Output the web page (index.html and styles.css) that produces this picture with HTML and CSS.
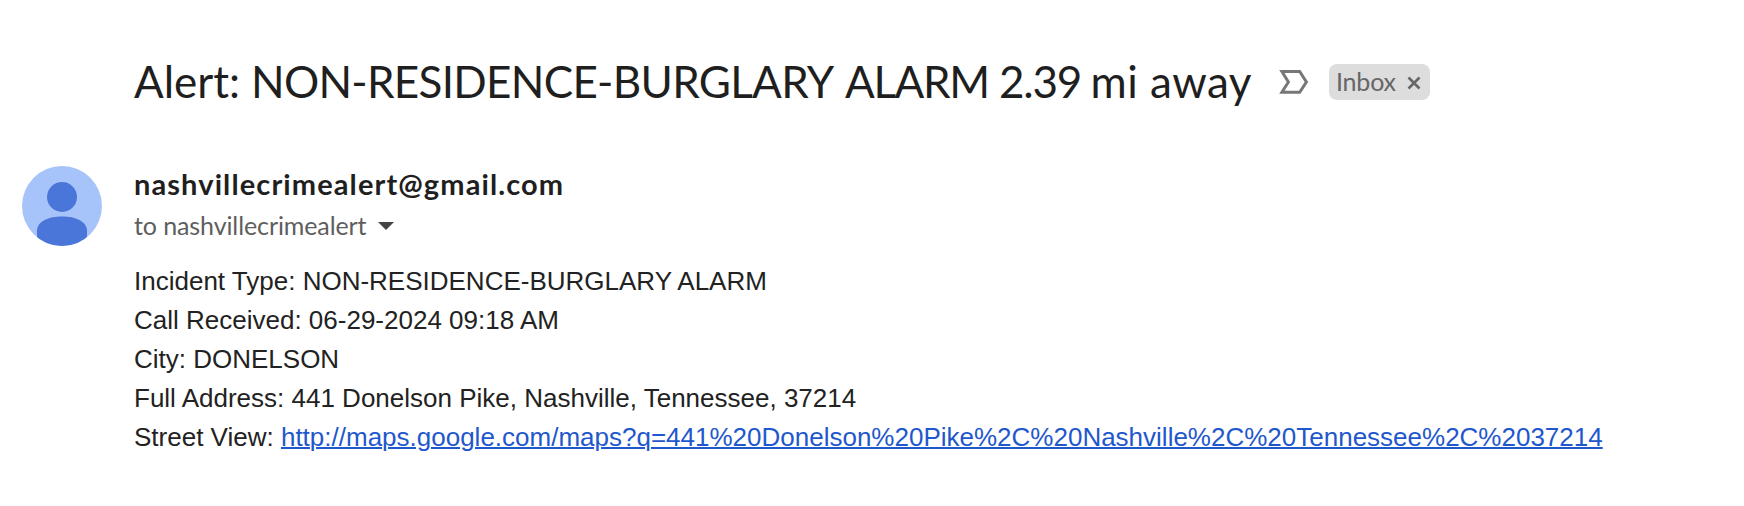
FILE: index.html
```html
<!DOCTYPE html>
<html lang="en">
<head>
<meta charset="utf-8">
<title>Alert</title>
<link rel="stylesheet" href="styles.css">
</head>
<body>
<header class="subject">
  <h1 class="title"><span class="w1">Alert: </span><span class="w2">NON-RESIDENCE-BURGLARY </span><span class="w3">ALARM </span><span class="w4">2.39 </span><span class="w5">mi </span><span class="w6">away</span></h1>
  <svg class="marker" width="32" height="26" viewBox="0 0 32 26"><path d="M3.900 2.500H21.700L28.400 13L21.700 23.300H3.900L10.400 13Z" fill="none" stroke="#777" stroke-width="3"/></svg>
  <div class="chip"><span class="chip-label">Inbox</span><svg class="close" width="14" height="14" viewBox="0 0 14 14"><path d="M1.500 1.500L12.500 12.500M12.500 1.500L1.500 12.500" stroke="#666" stroke-width="2.6"/></svg></div>
</header>
<main class="message">
  <svg class="avatar" width="80" height="80" viewBox="0 0 80 80">
    <defs><clipPath id="round"><circle cx="40" cy="40" r="40"/></clipPath></defs>
    <g clip-path="url(#round)"><rect width="80" height="80" fill="#a6c3fa"/><circle cx="40" cy="31" r="15" fill="#4b76d9"/><path d="M15 80V65C15 55 27 50.500 40 50.500S65 55 65 65V80Z" fill="#4b76d9"/></g>
  </svg>
  <div class="content">
    <div class="sender">nashvillecrimealert@gmail.com</div>
    <div class="recipient"><span>to nashvillecrimealert</span><svg class="arrow" width="16" height="8" viewBox="0 0 16 8"><path d="M0 0H16L8 8Z" fill="#444"/></svg></div>
    <div class="body">
      <div>Incident Type: NON-RESIDENCE-BURGLARY ALARM</div>
      <div>Call Received: 06-29-2024 09:18 AM</div>
      <div>City: DONELSON</div>
      <div>Full Address: 441 Donelson Pike, Nashville, Tennessee, 37214</div>
      <div>Street View: <a class="link" href="#">http://maps.google.com/maps?q=441%20Donelson%20Pike%2C%20Nashville%2C%20Tennessee%2C%2037214</a></div>
    </div>
  </div>
</main>
</body>
</html>
```
FILE: styles.css
```css
body { margin: 0; background: #fff; color: #1f1f1f; font-family: Lato, sans-serif; }
.subject { display: flex; align-items: center; height: 64px; padding: 50px 0 0 134px; }
.title { display: grid; grid-template-columns: 117px 594px 154px 91.5px 59.5px auto; margin: 0 0 2px; width: 1144px; font-size: 44px; line-height: 56px; font-weight: 400; white-space: nowrap; }
.w2 { letter-spacing: -0.7px; }
.w3 { letter-spacing: -1.4px; }
.w4 { letter-spacing: -1.2px; }
.w5, .w6 { letter-spacing: 0.5px; }
.marker { flex: none; }
.chip { display: flex; align-items: center; box-sizing: border-box; width: 101px; height: 36px; margin-left: 19px; padding-left: 7px; border-radius: 8px; background: #ddd; color: #666; }
.chip-label { width: 70.5px; margin-bottom: 2px; font-size: 25px; line-height: 34px; letter-spacing: -0.2px; }
.close { margin-top: 2px; }
.message { display: flex; padding: 52px 0 0 22px; }
.avatar { flex: none; }
.content { margin-left: 32px; white-space: nowrap; }
.sender { margin-top: -2px; font-size: 29px; line-height: 40px; font-weight: 700; letter-spacing: 1.1px; }
.recipient { display: flex; align-items: center; margin-top: 1px; font-size: 25px; line-height: 40px; letter-spacing: -0.1px; color: #5e5e5e; }
.arrow { margin: 2px 0 0 12px; }
.body { margin-top: 17px; font-family: "Liberation Sans", Arial, sans-serif; font-size: 26px; line-height: 39px; color: #222; }
.link { color: #1f57cc; text-decoration: underline; text-decoration-thickness: 2px; }
```
